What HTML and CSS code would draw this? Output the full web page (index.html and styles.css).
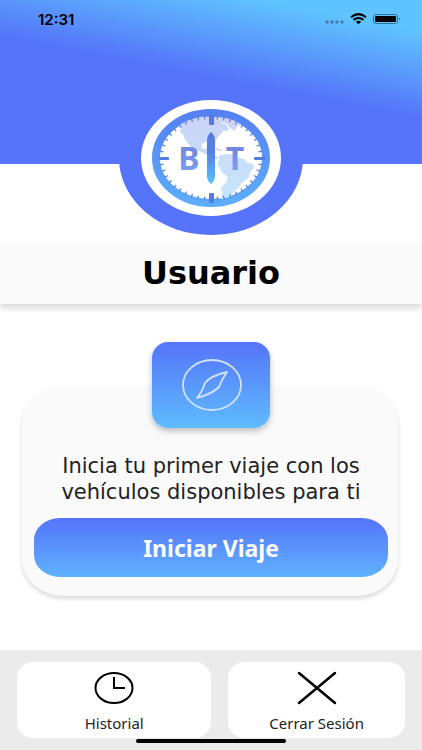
FILE: index.html
```html
<!DOCTYPE html>
<html lang="es">
<head>
  <meta charset="UTF-8" />
  <meta name="viewport" content="width=device-width, initial-scale=1.0" />
  <title>Usuario</title>
  <link rel="stylesheet" href="styles.css">
</head>
<body>

  <header class="header">
    <div class="status">
      <span class="time">12:31</span>
      <svg class="status-icons" width="76" height="14" viewBox="0 0 76 14" aria-hidden="true">
        <g fill="#000" opacity=".32">
          <circle cx="3" cy="10" r="1.7" /><circle cx="8" cy="10" r="1.7" />
          <circle cx="13" cy="10" r="1.7" /><circle cx="18" cy="10" r="1.7" />
        </g>
        <g fill="none" stroke="#000" stroke-width="2">
          <path d="M27 5.200Q34.500 -1 42 5.200" />
          <path d="M29.500 7.900Q34.500 4 39.500 7.900" />
        </g>
        <path d="M31.800 9.700Q34.500 7.600 37.200 9.700L34.500 12.200Z" />
        <rect x="49.500" y="2.500" width="24" height="9" rx="2.500" fill="none" stroke="#000" stroke-opacity=".42" />
        <rect x="51" y="4" width="21" height="6" rx="1.300" />
        <path d="M75 5.500Q76.500 7 75 8.500Z" opacity=".5" />
      </svg>
    </div>

    <svg class="logo" width="184" height="154" viewBox="0 0 184 154" role="img" aria-label="BT">
      <defs>
        <linearGradient id="ring" x1="0" y1="0" x2="0" y2="1">
          <stop offset="0" stop-color="#5580f2" />
          <stop offset="1" stop-color="#5caefb" />
        </linearGradient>
        <linearGradient id="needle" x1="0" y1="0" x2="0" y2="1">
          <stop offset="0" stop-color="#5878dd" />
          <stop offset=".4" stop-color="#5583e6" />
          <stop offset="1" stop-color="#5cc0ff" />
        </linearGradient>
        <linearGradient id="land" gradientUnits="userSpaceOnUse" x1="0" y1="80" x2="0" y2="320">
          <stop offset="0" stop-color="#ccd3f6" />
          <stop offset="1" stop-color="#c5e6fd" />
        </linearGradient>
        <linearGradient id="letter" x1="0" y1="0" x2="0" y2="1">
          <stop offset=".3" stop-color="#7189e0" />
          <stop offset=".8" stop-color="#7b9cf4" />
        </linearGradient>
        <clipPath id="dial"><ellipse cx="92" cy="77" rx="51" ry="42" /></clipPath>
      </defs>
      <ellipse cx="92" cy="77" rx="92" ry="77" fill="#5574f9" />
      <ellipse cx="92" cy="77" rx="70" ry="58" fill="#fff" />
      <ellipse cx="92" cy="77" rx="55" ry="45" fill="none" stroke="url(#ring)" stroke-width="8" />
      <g clip-path="url(#dial)">
        <g transform="translate(-9 9) scale(.3333)" fill="url(#land)">
          <path d="M203 105Q245 72 300 80L338 84L332 97L348 104L358 116L350 124L342 121L325 140L317 151L316 166L309 156L291 154L276 162L274 175L286 177L295 171L296 183L309 194L326 202L320 208L301 197L280 190L261 180L247 174L232 158L224 147L220 134L209 126L213 117Z" />
          <path d="M326 82L392 88L409 98L394 102L379 112L373 123L360 113L350 101L335 96Z" />
          <path d="M318 174L340 180L330 184L316 179Z" />
          <path d="M329 196L350 192L372 195L385 204L403 207L410 217L432 224L431 235L420 247L416 264L398 276L383 296L374 301L359 324L330 330L337 309L332 294L350 275L353 260L335 246L323 223Z" />
        </g>
      </g>
      <ellipse cx="92" cy="77" rx="50" ry="41" pathLength="44" fill="none" stroke="#5f82df" stroke-width="4" stroke-dasharray=".2 .8" stroke-dashoffset=".1" />
      <g fill="#5579e4">
        <rect x="90" y="34" width="5" height="10" rx="1" />
        <rect x="90" y="112" width="5" height="10" rx="1" />
        <rect x="40" y="76" width="10" height="3" rx="1" />
        <rect x="135" y="76" width="11" height="3" rx="1" />
      </g>
      <path d="M92 51Q96 54 96 60V96Q95 101 92 103Q89 101 88 96V60Q88 54 92 51Z" fill="url(#needle)" />
      <text class="logo-text" x="70" y="89" fill="url(#letter)">B</text>
      <text class="logo-text" x="116" y="89" fill="url(#letter)">T</text>
    </svg>
  </header>

  <h1 class="title">Usuario</h1>

  <main class="main">
    <section class="card">
      <div class="tile">
        <svg width="62" height="52" viewBox="0 0 62 52" fill="none" stroke="#cfe3ff" stroke-width="1.800" aria-hidden="true">
          <ellipse cx="32" cy="26" rx="29" ry="25" />
          <path d="M47 13Q30 17 25 24Q22 33 17 39Q32 35 39 28Q42 20 47 13Z" stroke-linejoin="round" />
        </svg>
      </div>
      <p class="message">Inicia tu primer viaje con los<br>vehículos disponibles para ti</p>
      <button class="start" type="button">Iniciar Viaje</button>
    </section>
  </main>

  <nav class="footer">
    <button class="action" type="button">
      <svg width="40" height="34" viewBox="0 0 40 34" fill="none" stroke="#000" stroke-width="2" aria-hidden="true">
        <ellipse cx="20" cy="17" rx="18.500" ry="15" />
        <path d="M20 6V17H31" />
      </svg>
      Historial
    </button>
    <button class="action" type="button">
      <svg width="40" height="34" viewBox="0 0 40 34" fill="none" stroke="#000" stroke-width="2.500" stroke-linecap="round" aria-hidden="true">
        <path d="M2 2L38 32M38 2L2 32" />
      </svg>
      Cerrar Sesión
    </button>
    <span class="home-bar"></span>
  </nav>

</body>
</html>
```
FILE: styles.css
```css
* { box-sizing: border-box; }

body {
  font-family: 'Noto Sans', sans-serif;
  background-color: #fff;
  color: #222;
  margin: 0;
  min-height: 100vh;
  display: flex;
  flex-direction: column;
}

.header {
  height: 164px;
  display: flex;
  flex-direction: column;
  align-items: center;
  gap: 43px;
  background: linear-gradient(191deg, #5fc3ff 13%, #5574f9 48%);
}

.status {
  width: 100%;
  height: 38px;
  padding: 0 22px 0 38px;
  display: flex;
  flex-shrink: 0;
  justify-content: space-between;
  align-items: center;
}

.time {
  font-family: Inter, sans-serif;
  font-size: 15px;
  font-weight: 600;
  color: #000;
}

.logo { flex-shrink: 0; }

.logo-text {
  font-size: 32px;
  font-weight: 700;
  text-anchor: middle;
}

.title {
  margin: 79px 0 0;
  font-family: 'DejaVu Sans', sans-serif;
  font-size: 32px;
  line-height: 61px;
  text-align: center;
  color: #000;
  background: #fafafa;
  box-shadow: 0 5px 5px rgba(0,0,0,0.13);
}

.main { padding: 82px 24px 50px 22px; }

.card {
  padding: 0 10px 19px 12px;
  display: flex;
  flex-direction: column;
  align-items: center;
  background: #fafafa;
  border-radius: 42px / 36px;
  box-shadow: 0 3px 4px rgba(0,0,0,0.14);
}

.tile {
  width: 118px;
  height: 86px;
  margin-top: -44px;
  display: flex;
  justify-content: center;
  align-items: center;
  border-radius: 16px;
  background: linear-gradient(#5574f9, #5fbcff);
  box-shadow: 0 3px 6px rgba(0,0,0,0.25);
}

.message {
  margin: 25px 0 13px;
  font-family: 'DejaVu Sans', sans-serif;
  font-size: 21px;
  line-height: 26px;
  text-align: center;
}

.start {
  width: 100%;
  height: 59px;
  border: none;
  border-radius: 26px / 22px;
  font-family: inherit;
  font-size: 23px;
  font-weight: 700;
  color: #fff;
  background: linear-gradient(#5574f9, #5fb2ff);
  cursor: pointer;
}

.footer {
  position: relative;
  margin-top: auto;
  padding: 12px 17px;
  display: grid;
  grid-template-columns: 11fr 10fr;
  gap: 17px;
  background: #ebebeb;
}

.action {
  height: 76px;
  padding: 9px 0 0;
  display: flex;
  flex-direction: column;
  align-items: center;
  gap: 9px;
  border: none;
  border-radius: 16px;
  font-family: inherit;
  font-size: 15px;
  line-height: 18px;
  color: #222;
  background: #fff;
  cursor: pointer;
}

.home-bar {
  position: absolute;
  left: 50%;
  bottom: 7px;
  width: 150px;
  height: 4px;
  transform: translateX(-50%);
  border-radius: 2px;
  background: #000;
}
```
